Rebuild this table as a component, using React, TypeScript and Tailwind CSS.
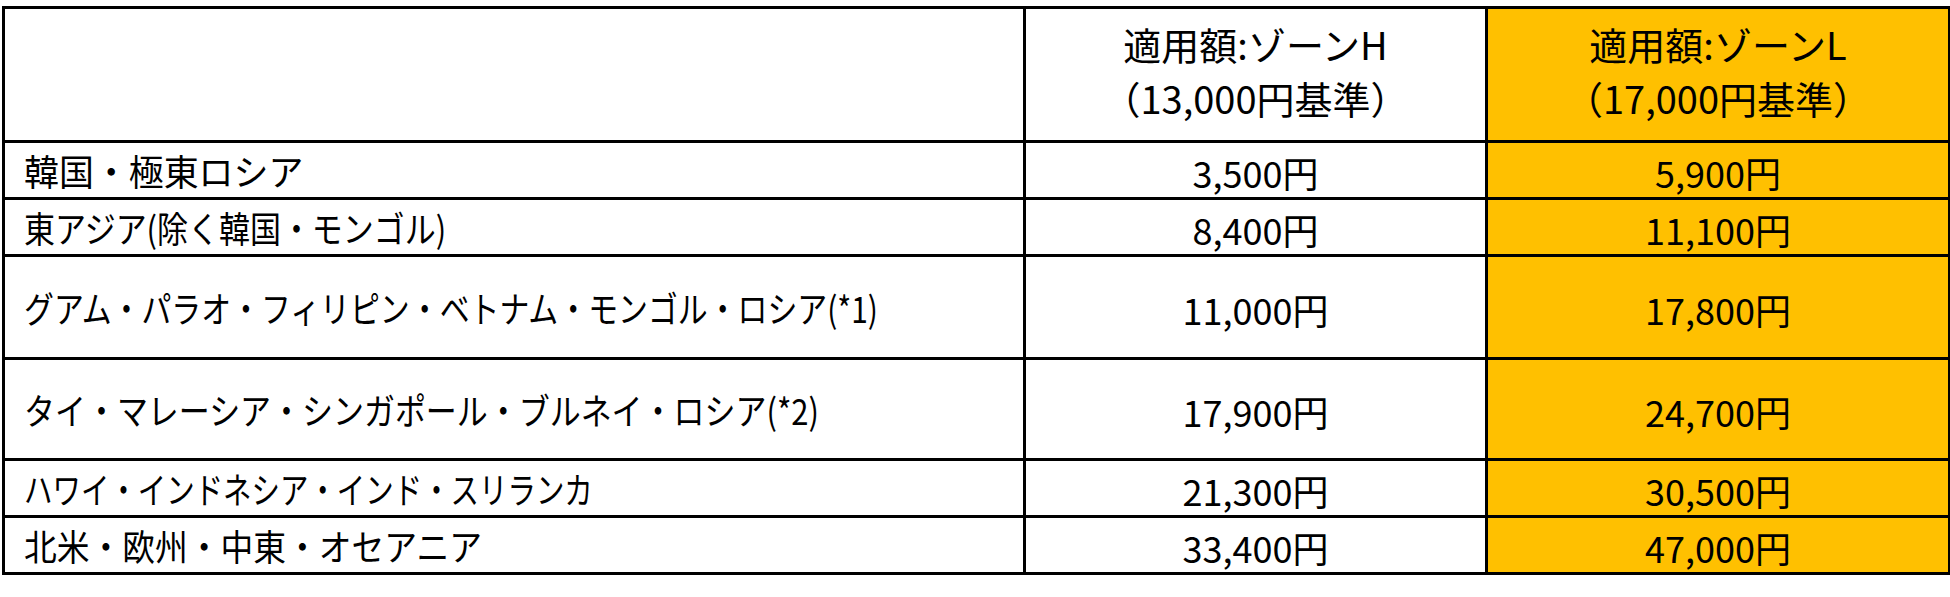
const rows = [
  { name: "韓国・極東ロシア", zoneH: "3,500円", zoneL: "5,900円", height: "h-[57px]", squeeze: "scale-x-[0.97]" },
  { name: "東アジア(除く韓国・モンゴル)", zoneH: "8,400円", zoneL: "11,100円", height: "h-[57px]", squeeze: "scale-x-[0.86]" },
  { name: "グアム・パラオ・フィリピン・ベトナム・モンゴル・ロシア(*1)", zoneH: "11,000円", zoneL: "17,800円", height: "h-[103px]", squeeze: "scale-x-[0.83]" },
  { name: "タイ・マレーシア・シンガポール・ブルネイ・ロシア(*2)", zoneH: "17,900円", zoneL: "24,700円", height: "h-[101px]", squeeze: "scale-x-[0.86]" },
  { name: "ハワイ・インドネシア・インド・スリランカ", zoneH: "21,300円", zoneL: "30,500円", height: "h-[57px]", squeeze: "scale-x-[0.79]" },
  { name: "北米・欧州・中東・オセアニア", zoneH: "33,400円", zoneL: "47,000円", height: "h-[57px]", squeeze: "scale-x-[0.91]" },
];

export default function App() {
  return (
    <div className="w-[1950px] h-[597px] bg-white pt-[6px] pl-[2px] font-['Noto_Sans_CJK_JP','Noto_Sans',sans-serif] text-black text-[36px]">
      <table className="w-[1946px] border-collapse border-[3px] border-black table-fixed">
        <colgroup>
          <col className="w-[1021px]" />
          <col className="w-[462px]" />
          <col className="w-[463px]" />
        </colgroup>
        <thead>
          <tr className="h-[134px]">
            <th className="border-[3px] border-black" />
            <th className="border-[3px] border-black align-top pt-[8px] font-normal text-[38px] leading-[54px]">
              <div>適用額:ゾーンH</div>
              <div>（13,000円基準）</div>
            </th>
            <th className="border-[3px] border-black bg-[#ffc000] align-top pt-[8px] font-normal text-[38px] leading-[54px]">
              <div>適用額:ゾーンL</div>
              <div>（17,000円基準）</div>
            </th>
          </tr>
        </thead>
        <tbody>
          {rows.map((r) => (
            <tr key={r.name} className={r.height}>
              <td className="border-[3px] border-black pl-[19px] leading-none whitespace-nowrap">
                <span className={`inline-block origin-left ${r.squeeze}`}>{r.name}</span>
              </td>
              <td className="border-[3px] border-black text-center leading-none pt-[4px]">{r.zoneH}</td>
              <td className="border-[3px] border-black bg-[#ffc000] text-center leading-none pt-[4px]">{r.zoneL}</td>
            </tr>
          ))}
        </tbody>
      </table>
    </div>
  );
}
